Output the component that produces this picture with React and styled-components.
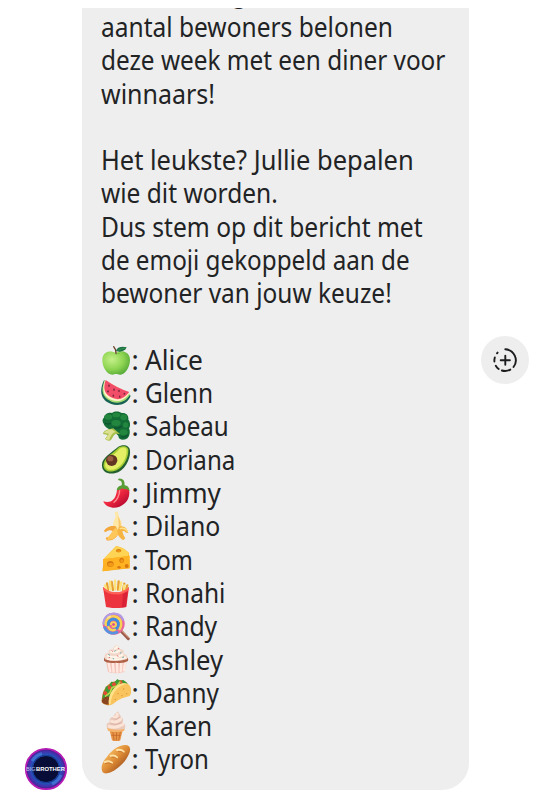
import styled, { createGlobalStyle } from "styled-components";

const GlobalStyle = createGlobalStyle`
   body {
      margin: 0;
      background: #fff;
   }
`;

const intro = [
   { text: "aantal bewoners belonen", stretch: 0.908 },
   { text: "deze week met een diner voor", stretch: 0.901 },
   { text: "winnaars!", stretch: 0.925 },
   { text: "" },
   { text: "Het leukste? Jullie bepalen", stretch: 0.943 },
   { text: "wie dit worden.", stretch: 0.908 },
   { text: "Dus stem op dit bericht met", stretch: 0.91 },
   { text: "de emoji gekoppeld aan de", stretch: 0.897 },
   { text: "bewoner van jouw keuze!", stretch: 0.905 },
   { text: "" },
]

const housemates = [
   { name: "Alice", Icon: Apple, stretch: 0.975 },
   { name: "Glenn", Icon: Watermelon, stretch: 0.905 },
   { name: "Sabeau", Icon: Broccoli, stretch: 0.895 },
   { name: "Doriana", Icon: Avocado, stretch: 0.893 },
   { name: "Jimmy", Icon: Pepper, stretch: 0.965 },
   { name: "Dilano", Icon: Banana, stretch: 0.92 },
   { name: "Tom", Icon: Cheese, stretch: 0.875 },
   { name: "Ronahi", Icon: Fries, stretch: 0.907 },
   { name: "Randy", Icon: Lollipop, stretch: 0.913 },
   { name: "Ashley", Icon: Cupcake, stretch: 0.947 },
   { name: "Danny", Icon: Taco, stretch: 0.9 },
   { name: "Karen", Icon: IceCream, stretch: 0.9 },
   { name: "Tyron", Icon: Bread, stretch: 0.89 },
]

function Apple() {
   return (
      <Emoji viewBox="0 0 90 90">
         <defs>
            <radialGradient id="apple" cx="0.35" cy="0.35" r="0.75">
               <stop offset="0" stopColor="#c5f08a" />
               <stop offset="0.55" stopColor="#8fd552" />
               <stop offset="1" stopColor="#4fa535" />
            </radialGradient>
         </defs>
         <path d="M44 24C58 14 87 18 87 45C87 68 70 90 58 89C51 88 49 87 45 87C40 87 36 91 28 88C14 82 4 64 4 45C4 19 29 15 44 24Z" fill="url(#apple)" />
         <path d="M31 23Q44 31 58 23Q50 33 31 23Z" fill="#509832" />
         <path d="M45 25Q46 14 38 5" fill="none" stroke="#653b24" strokeWidth="4" strokeLinecap="round" />
         <path d="M45 17C50 5 65 4 77 7C72 20 55 23 45 17Z" fill="#1d7143" />
         <path d="M50 16Q60 12 72 9" fill="none" stroke="#42a25b" strokeWidth="2" />
      </Emoji>
   )
}

function Watermelon() {
   return (
      <Emoji viewBox="0 0 90 90">
         <path d="M9 7C-8 42 2 67 29 77C52 86 80 79 89 53Z" fill="#176353" />
         <path d="M11 7C-3 40 6 61 32 71C55 79 77 70 87 49Z" fill="#a8dd75" />
         <path d="M12 7C1 39 9 58 34 67C55 74 73 65 85 46Z" fill="#fff1c7" />
         <path d="M14 6C4 36 13 52 37 61C56 68 71 59 85 42C60 34 37 22 14 6Z" fill="#f24d68" />
         <g fill="#7e263e">
            <ellipse cx="24" cy="23" rx="2.5" ry="3.5" /><ellipse cx="21" cy="40" rx="2.5" ry="3.5" />
            <ellipse cx="39" cy="35" rx="2.5" ry="3.5" /><ellipse cx="37" cy="53" rx="2.5" ry="3.5" />
            <ellipse cx="54" cy="39" rx="2.5" ry="3.5" /><ellipse cx="56" cy="56" rx="2.5" ry="3.5" />
            <ellipse cx="70" cy="47" rx="2.5" ry="3" />
         </g>
      </Emoji>
   )
}

function Broccoli() {
   return (
      <Emoji viewBox="0 0 90 90">
         <path d="M9 20C12 6 26 4 33 6C42-1 56 1 62 6C76 4 84 14 82 26C89 34 88 46 84 52C89 62 86 80 74 85C62 89 52 84 52 74L34 56C22 56 10 46 8 38C3 32 4 24 9 20Z" fill="#136b35" />
         <g fill="#23863f">
            <ellipse cx="22" cy="18" rx="12" ry="8" /><ellipse cx="46" cy="12" rx="12" ry="7" /><ellipse cx="68" cy="19" rx="10" ry="9" />
            <ellipse cx="45" cy="36" rx="14" ry="9" /><ellipse cx="74" cy="42" rx="8" ry="8" /><ellipse cx="68" cy="64" rx="12" ry="9" />
         </g>
         <path d="M12 36Q22 42 30 36M38 50Q52 56 62 45M60 77Q70 81 80 72" fill="none" stroke="#0d5330" strokeWidth="4" />
         <path d="M37 52L58 70Q45 66 39 73L30 87Q22 92 12 84L20 72L6 69Q7 58 24 55Z" fill="#a6c04d" />
         <path d="M32 55L44 63Q34 65 28 78L25 86Q19 88 14 83L24 68L9 66Q14 57 32 55Z" fill="#dde08e" />
      </Emoji>
   )
}

function Avocado() {
   return (
      <Emoji viewBox="0 0 90 90">
         <path d="M51 9C65 0 87 3 87 21C89 42 73 82 41 88C19 92 2 82 3 63C2 41 32 26 51 9Z" fill="#24612f" />
         <path d="M54 10C68 2 84 8 82 21C82 45 64 76 37 82C17 86 5 74 8 59C12 39 38 27 54 10Z" fill="#a8cf36" />
         <path d="M56 14C68 7 79 11 77 23C76 44 60 71 37 77C19 80 10 70 13 59C17 43 43 31 56 14Z" fill="#e4ef65" />
         <circle cx="32" cy="49" r="17" fill="#633624" />
         <ellipse cx="28" cy="44" rx="9" ry="8" fill="#9b6041" />
      </Emoji>
   )
}

function Pepper() {
   return (
      <Emoji viewBox="0 0 90 90">
         <defs>
            <linearGradient id="pepper" x1="0.3" y1="0" x2="1" y2="0.7">
               <stop offset="0" stopColor="#ff5260" />
               <stop offset="0.5" stopColor="#ec253e" />
               <stop offset="1" stopColor="#b60932" />
            </linearGradient>
         </defs>
         <path d="M48 35C55 24 78 23 84 35C91 67 63 91 35 89C20 87 10 80 7 70C33 77 45 62 48 35Z" fill="url(#pepper)" />
         <path d="M56 38Q54 61 39 73" fill="none" stroke="#ff8991" strokeWidth="4" strokeLinecap="round" />
         <path d="M47 37Q48 25 62 22Q65 8 53 7Q49 4 53 2Q72 0 71 22Q84 23 86 39Q77 30 70 34Q62 28 57 35Z" fill="#579c36" />
      </Emoji>
   )
}

function Banana() {
   return (
      <Emoji viewBox="0 0 90 90">
         <path d="M41 4L50 1L54 17Q69 39 58 67L42 70Q29 40 44 17Z" fill="#ffe7a5" />
         <path d="M50 15Q65 35 57 65L49 67Q57 41 50 15Z" fill="#f8c76d" />
         <path d="M44 46C32 43 18 45 8 61L14 63Q25 53 36 61Q36 76 14 80L17 88Q44 92 54 64Z" fill="#f2a63b" />
         <path d="M43 50Q32 63 20 80L19 87Q50 86 54 59Z" fill="#ffc65a" />
         <path d="M55 47C67 42 80 52 82 65L75 65Q70 58 64 61Q67 75 73 82L66 88Q49 77 49 61Z" fill="#f6b443" />
         <path d="M56 53Q72 48 80 62" fill="none" stroke="#ffe28b" strokeWidth="4" />
      </Emoji>
   )
}

function Cheese() {
   return (
      <Emoji viewBox="0 0 90 90">
         <path d="M8 45L45 7Q63 8 84 27L86 73L5 82Z" fill="#f7a718" />
         <path d="M8 45L45 7Q65 9 84 27L82 36Q52 40 8 45Z" fill="#ffd354" />
         <path d="M6 46Q49 40 86 35L86 73Q49 75 5 82L5 71Q17 65 6 60Z" fill="#ffb323" />
         <g fill="#d8780f">
            <ellipse cx="53" cy="20" rx="8" ry="5" /><ellipse cx="28" cy="60" rx="10" ry="9" />
            <ellipse cx="62" cy="49" rx="7" ry="8" /><ellipse cx="77" cy="66" rx="6" ry="6" />
            <ellipse cx="54" cy="70" rx="5" ry="4" />
         </g>
         <g fill="#f09a17">
            <ellipse cx="29" cy="62" rx="8" ry="6" /><ellipse cx="63" cy="51" rx="5" ry="5" /><ellipse cx="54" cy="22" rx="6" ry="3" />
         </g>
      </Emoji>
   )
}

function Fries() {
   return (
      <Emoji viewBox="0 0 90 90">
         <g strokeWidth="7" strokeLinecap="round">
            <path d="M21 37L18 16M36 36L32 12M51 35L53 10M66 37L70 17M74 36L79 22" stroke="#e7a12f" />
            <path d="M16 34L12 22M28 34L27 10M43 34L42 8M56 35L61 13M70 35L69 22" stroke="#ffe27a" />
         </g>
         <path d="M6 27Q26 48 45 43Q66 48 84 27L76 87Q45 94 15 87Z" fill="#ec343f" />
         <path d="M6 27Q24 43 45 43Q66 43 84 27L83 36Q64 51 45 49Q23 50 7 35Z" fill="#ff6056" />
         <path d="M66 48L80 40L75 87L62 89Z" fill="#ce1731" opacity="0.6" />
      </Emoji>
   )
}

function Lollipop() {
   return (
      <Emoji viewBox="0 0 90 90">
         <path d="M60 60L82 83" stroke="#9c5a4a" strokeWidth="9" strokeLinecap="round" />
         <path d="M61 58L82 80" stroke="#d99a7c" strokeWidth="3" strokeLinecap="round" />
         <circle cx="38" cy="38" r="33" fill="#e9639c" />
         <g fill="none" strokeWidth="7" strokeLinecap="round">
            <path d="M8 38C8 19 22 8 38 8C51 8 62 15 66 26" stroke="#ae9be4" />
            <path d="M15 42C12 22 31 11 47 18C61 25 64 42 56 54" stroke="#f6d353" strokeWidth="8" />
            <path d="M11 50C18 65 34 70 48 64" stroke="#5794e0" strokeWidth="8" />
            <path d="M22 44C19 29 34 20 46 27C57 35 53 52 40 56" stroke="#3f8fdd" strokeWidth="8" />
            <path d="M22 48C26 57 35 60 42 56" stroke="#f6d353" />
            <path d="M30 40C31 32 42 31 45 39C46 46 39 49 35 46" stroke="#f6d353" strokeWidth="6" />
            <path d="M37 40L38 41" stroke="#df4d8d" strokeWidth="6" />
         </g>
         <ellipse cx="24" cy="18" rx="8" ry="3" transform="rotate(-35 24 18)" fill="#fff" opacity="0.4" />
      </Emoji>
   )
}

function Cupcake() {
   return (
      <Emoji viewBox="0 0 90 90">
         <path d="M14 47L78 47L70 84Q45 92 21 84Z" fill="#f3c6bd" />
         <path d="M22 51L28 84M35 52L38 86M48 52L49 86M61 52L59 85M73 50L68 82" stroke="#ffe9e0" strokeWidth="7" />
         <path d="M9 44Q11 37 22 39L73 39Q84 41 81 51Q68 59 45 56Q19 59 9 50Z" fill="#af6248" />
         <path d="M12 42C7 32 17 25 23 28C21 17 28 14 35 17C36 9 43 4 49 2C54 7 54 14 60 16C67 16 71 23 67 29C78 29 83 40 77 46Q44 56 12 46Z" fill="#f2d8ca" />
         <path d="M18 35Q42 46 67 31M28 23Q43 29 57 19M39 14Q48 13 49 5M18 44Q45 51 75 40" stroke="#fff5e9" strokeWidth="6" fill="none" />
         <path d="M22 31L27 34M40 22L44 20M57 28L61 25M64 41L69 39M35 43L39 45" stroke="#60a8b2" strokeWidth="3" />
         <path d="M48 35L52 37M32 20L35 23M51 13L55 15M23 42L27 40" stroke="#e16f77" strokeWidth="3" />
      </Emoji>
   )
}

function Taco() {
   return (
      <Emoji viewBox="0 0 90 90">
         <path d="M2 76Q1 24 44 12Q69 2 84 27L29 83Q12 89 2 76Z" fill="#c57928" />
         <path d="M4 66L7 46L12 42L14 29L25 26L30 14L41 15L49 6L58 12L67 9L80 19L34 45L25 72Z" fill="#3c9b35" />
         <g fill="#e64c35">
            <circle cx="13" cy="49" r="6" /><circle cx="26" cy="32" r="6" /><circle cx="39" cy="22" r="6" /><circle cx="59" cy="16" r="5" />
         </g>
         <path d="M12 59L27 47L33 32L48 26L58 14" fill="none" stroke="#b8d64a" strokeWidth="5" />
         <path d="M3 70Q12 55 25 60L28 79Q12 86 3 75Z" fill="#89451f" />
         <path d="M24 83C18 45 54 9 80 21C93 27 93 48 86 57C69 61 53 67 40 78Q31 86 24 83Z" fill="#f9c45d" />
         <path d="M24 83C18 45 54 9 80 21C52 22 31 48 29 81Z" fill="#ffe08b" />
         <g fill="#dd9438">
            <circle cx="51" cy="50" r="2" /><circle cx="68" cy="36" r="2" /><circle cx="77" cy="50" r="2" /><circle cx="43" cy="67" r="2" /><circle cx="63" cy="56" r="2" />
         </g>
      </Emoji>
   )
}

function IceCream() {
   return (
      <Emoji viewBox="0 0 90 90">
         <path d="M25 54L66 54L58 88Q47 94 33 88Z" fill="#e99747" />
         <path d="M29 62L61 62M31 73L59 73M35 58L39 88M47 58L46 88M59 58L53 88" stroke="#c96f31" strokeWidth="3" />
         <path d="M18 50Q44 59 71 49L70 59Q44 68 21 59Z" fill="#f4b26a" />
         <path d="M18 50C14 38 21 34 27 34C23 23 30 18 37 18C39 10 46 4 53 1C51 8 61 12 60 19C69 22 67 32 64 36C75 37 75 49 69 54Q44 60 18 50Z" fill="#eacabc" />
         <path d="M25 46Q46 53 66 40M32 31Q47 37 59 24M40 19Q49 19 49 9" stroke="#fbe4d6" strokeWidth="9" fill="none" strokeLinecap="round" />
         <path d="M28 38Q45 44 63 35M37 23Q47 28 57 19" stroke="#d5a598" strokeWidth="2" fill="none" />
      </Emoji>
   )
}

function Bread() {
   return (
      <Emoji viewBox="0 0 90 90">
         <defs>
            <linearGradient id="bread" x1="0.2" y1="0.2" x2="0.8" y2="0.8">
               <stop offset="0" stopColor="#f8bf65" />
               <stop offset="0.5" stopColor="#dd8b34" />
               <stop offset="1" stopColor="#9f501f" />
            </linearGradient>
         </defs>
         <path d="M5 85C-3 70 5 52 18 38C32 19 52 3 73 3C87 3 91 14 84 30C73 56 44 82 22 87Q10 90 5 85Z" fill="url(#bread)" />
         <path d="M12 54Q24 49 33 56M29 35Q41 32 48 40M48 18Q61 15 68 23" stroke="#ffe2a6" strokeWidth="6" fill="none" strokeLinecap="round" />
         <path d="M12 59Q24 54 33 60M31 40Q41 37 48 44M51 23Q61 20 68 27" stroke="#bd6b2b" strokeWidth="2" fill="none" />
      </Emoji>
   )
}

function Avatar() {
   return (
      <AvatarImage viewBox="0 0 44 44">
         <defs>
            <radialGradient id="eye">
               <stop offset="0" stopColor="#080a28" />
               <stop offset="0.6" stopColor="#0a1247" />
               <stop offset="0.72" stopColor="#2451b8" />
               <stop offset="0.86" stopColor="#4332ad" />
               <stop offset="1" stopColor="#4a1a86" />
            </radialGradient>
         </defs>
         <circle cx="22" cy="22" r="20.2" fill="url(#eye)" stroke="#b61bb4" strokeWidth="1.8" />
         <path d="M8 14A16 16 0 0 1 18 6.5M37 28A16 16 0 0 1 28 37" fill="none" stroke="#4a9df0" strokeWidth="3" opacity="0.5" />
         <circle cx="22" cy="22" r="13.5" fill="#080d38" stroke="#1c43a3" />
         <text x="2" y="23.8" fontSize="5.2" fontFamily="Liberation Sans, sans-serif" fill="#c3c2ea" textLength="9.5" lengthAdjust="spacingAndGlyphs">BIG</text>
         <text x="12" y="23.8" fontSize="5.2" fontFamily="Liberation Sans, sans-serif" fontWeight="bold" fill="#fff" textLength="29" lengthAdjust="spacingAndGlyphs">BROTHER</text>
      </AvatarImage>
   )
}

function App() {
   return (
      <>
      <GlobalStyle />
      <Chat>
         <Sender>
            <Avatar />
         </Sender>
         <Bubble>
            <CutLine $stretch={0.91}>g</CutLine>
            {
               intro.map((line, i) => <Line key={i} $stretch={line.stretch}>{line.text}</Line>)
            }
            {
               housemates.map(({ name, Icon, stretch }) => (
                  <Option key={name}>
                     <Icon />
                     <Colon>:</Colon>
                     <Name $stretch={stretch}>{name}</Name>
                  </Option>
               ))
            }
         </Bubble>
         <ReactButton aria-label="Reageer">
            <svg width="28" height="28" viewBox="0 0 28 28" fill="none" stroke="#1c1d1f" strokeWidth="1.9" strokeLinecap="round">
               <path d="M14.3 3.3A11 11 0 0 1 22.5 21M19.3 23.6A11 11 0 0 1 10.8 24.5M7.7 23A11 11 0 0 1 4.8 19.7M3.4 15.5A11 11 0 0 1 3.8 11.5M6 7.3L6.6 6.6" />
               <path d="M14.3 9.6V18.8M9.7 14.2H18.9" />
            </svg>
         </ReactButton>
      </Chat>
      </>
   )
}

export default App;

const Chat = styled.main`
   display: flex;
   box-sizing: border-box;
   width: 542px;
   height: 800px;
   padding: 7.5px 0 10px;
   overflow: hidden;
   font-family: "Noto Sans", sans-serif;
   font-size: 27px;
   color: #222325;
`;

const Sender = styled.div`
   display: flex;
   align-items: flex-end;
   width: 82px;
   flex-shrink: 0;
   padding-left: 24px;
   box-sizing: border-box;
`;

const AvatarImage = styled.svg`
   width: 44px;
   height: 44px;
   margin-bottom: -1px;
`;

const Bubble = styled.section`
   box-sizing: border-box;
   width: 387px;
   flex-shrink: 0;
   padding-left: 19px;
   overflow: hidden;
   background: #eee;
   border-radius: 0 0 27px 27px;
`;

const Line = styled.p`
   width: max-content;
   height: 33.3px;
   margin: 0;
   line-height: 33.3px;
   white-space: nowrap;
   transform: scaleX(${props => props.$stretch || 1});
   transform-origin: left;
`;

const CutLine = styled(Line)`
   margin: -32.7px 0 1.8px;
   padding-left: 144px;
`;

const Option = styled.div`
   display: flex;
   align-items: center;
   height: 33.3px;
   line-height: 33.3px;
`;

const Emoji = styled.svg`
   width: 30px;
   height: 30px;
   flex-shrink: 0;
`;

const Colon = styled.span`
   box-sizing: border-box;
   width: 14px;
   padding-left: 0.5px;
`;

const Name = styled.span`
   transform: scaleX(${props => props.$stretch || 1});
   transform-origin: left;
`;

const ReactButton = styled.button`
   display: flex;
   align-items: center;
   justify-content: center;
   width: 48px;
   height: 48px;
   margin: 328.5px 0 0 12.4px;
   padding: 0;
   border: 0;
   border-radius: 50%;
   background: #eee;
`;
